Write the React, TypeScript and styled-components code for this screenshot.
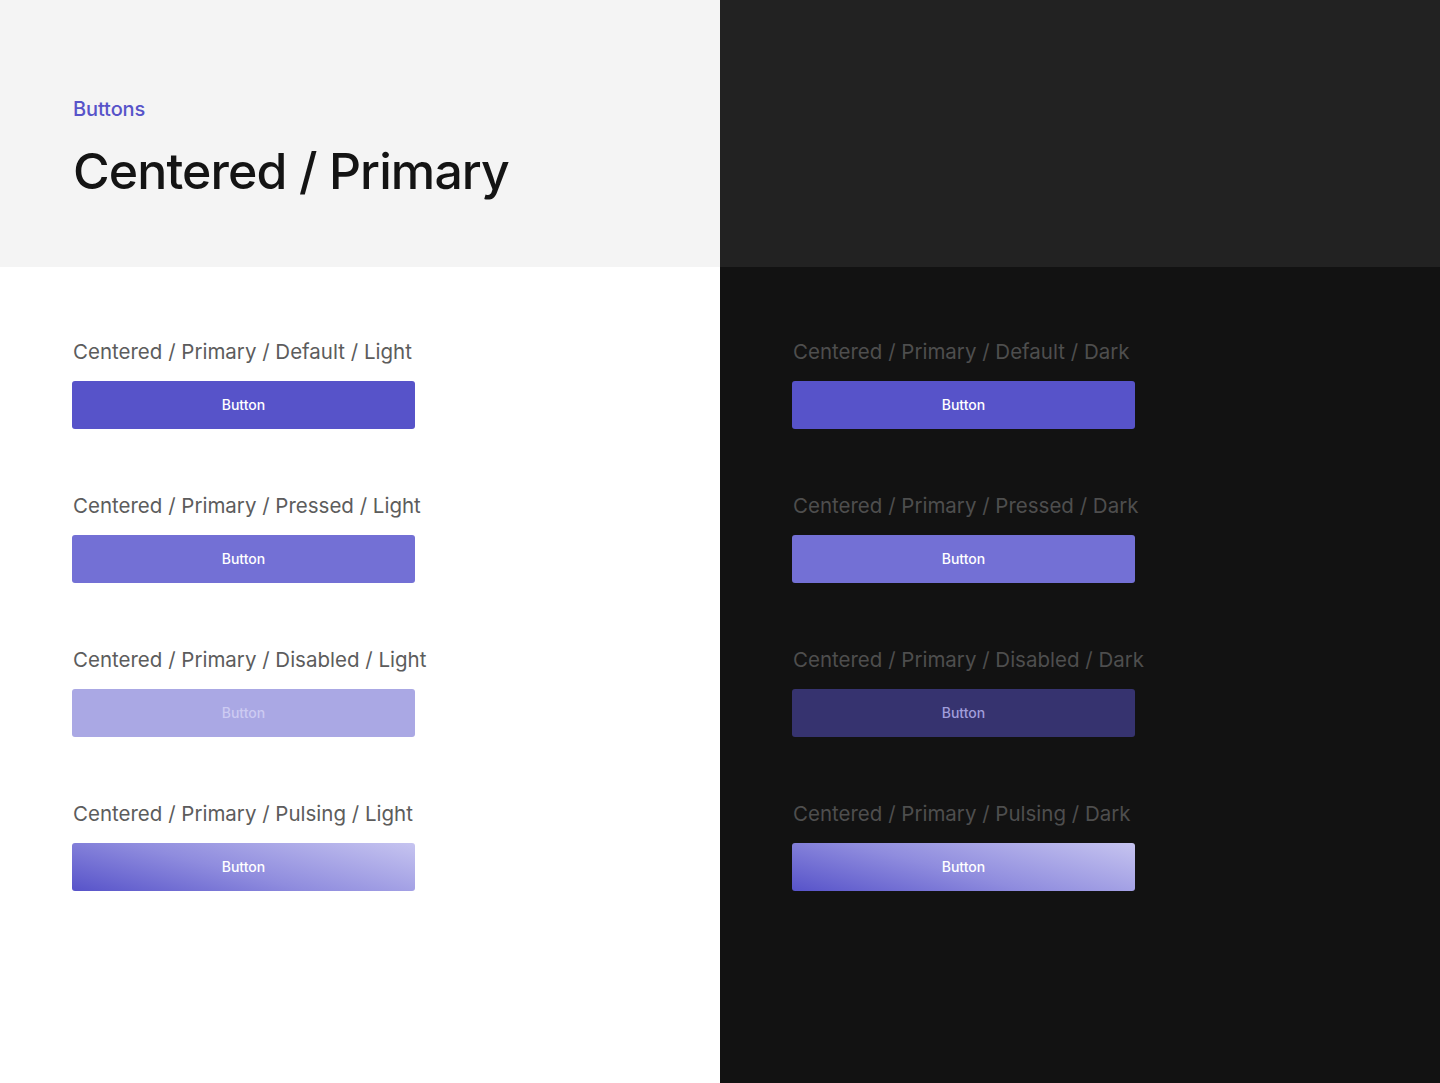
import React from "react";
import styled, { createGlobalStyle } from "styled-components";

const Global = createGlobalStyle`
  html, body { margin: 0; padding: 0; }
  body { font-family: Inter, "Noto Sans", sans-serif; -webkit-font-smoothing: antialiased; }
`;

const Page = styled.div`
  display: grid;
  grid-template-columns: 720px 720px;
  grid-template-rows: 267px 816px;
  width: 1440px;
  height: 1083px;
`;

const Header = styled.div<{ $dark?: boolean }>`
  background: ${(p) => (p.$dark ? "#222222" : "#f4f4f4")};
  padding: 96px 0 0 73px;
  box-sizing: border-box;
`;

const Eyebrow = styled.div`
  color: #5753c9;
  font-size: 20px;
  line-height: 26px;
  font-weight: 500;
  letter-spacing: -0.1px;
`;

const Title = styled.h1`
  margin: 19px 0 0 0;
  color: #141414;
  font-size: 50px;
  line-height: 60px;
  font-weight: 500;
  letter-spacing: -0.9px;
`;

const Panel = styled.div<{ $dark?: boolean }>`
  background: ${(p) => (p.$dark ? "#121212" : "#ffffff")};
  padding: 71px 0 0 72px;
  box-sizing: border-box;
  display: flex;
  flex-direction: column;
  gap: 63px;
`;

const Item = styled.div`
  display: flex;
  flex-direction: column;
  gap: 15px;
`;

const Label = styled.div<{ $dark?: boolean }>`
  color: ${(p) => (p.$dark ? "#4e4e4e" : "#5c5c5c")};
  font-size: 20.5px;
  line-height: 28px;
  font-weight: 400;
  letter-spacing: 0px;
  padding-left: 1px;
`;

type Variant = "default" | "pressed" | "disabled" | "pulsing";

const bg = (v: Variant, dark: boolean) => {
  switch (v) {
    case "default":
      return "#5753c9";
    case "pressed":
      return "#7370d5";
    case "disabled":
      return dark ? "#36336f" : "#aaa8e4";
    case "pulsing":
      return "linear-gradient(15deg, #5753c9 0%, #8f8cde 45%, #c6c4f0 100%)";
  }
};

const fg = (v: Variant, dark: boolean) => {
  if (v === "disabled") return dark ? "#a19edb" : "#cdcbf2";
  return "#ffffff";
};

const Btn = styled.button<{ $v: Variant; $dark: boolean }>`
  width: 343px;
  height: 48px;
  border: none;
  border-radius: 3px;
  background: ${(p) => bg(p.$v, p.$dark)};
  color: ${(p) => fg(p.$v, p.$dark)};
  font-family: Inter, "Noto Sans", sans-serif;
  font-size: 14px;
  font-weight: 500;
  display: flex;
  align-items: center;
  justify-content: center;
  padding: 0 0 1px 0;
  cursor: pointer;
`;

const variants: { v: Variant; name: string }[] = [
  { v: "default", name: "Default" },
  { v: "pressed", name: "Pressed" },
  { v: "disabled", name: "Disabled" },
  { v: "pulsing", name: "Pulsing" },
];

const Column = ({ dark }: { dark: boolean }) => (
  <Panel $dark={dark}>
    {variants.map((x) => (
      <Item key={x.v}>
        <Label $dark={dark}>
          Centered / Primary / {x.name} / {dark ? "Dark" : "Light"}
        </Label>
        <Btn $v={x.v} $dark={dark}>
          Button
        </Btn>
      </Item>
    ))}
  </Panel>
);

export default function App() {
  return (
    <>
      <Global />
      <Page>
        <Header>
          <Eyebrow>Buttons</Eyebrow>
          <Title>Centered / Primary</Title>
        </Header>
        <Header $dark />
        <Column dark={false} />
        <Column dark={true} />
      </Page>
    </>
  );
}
